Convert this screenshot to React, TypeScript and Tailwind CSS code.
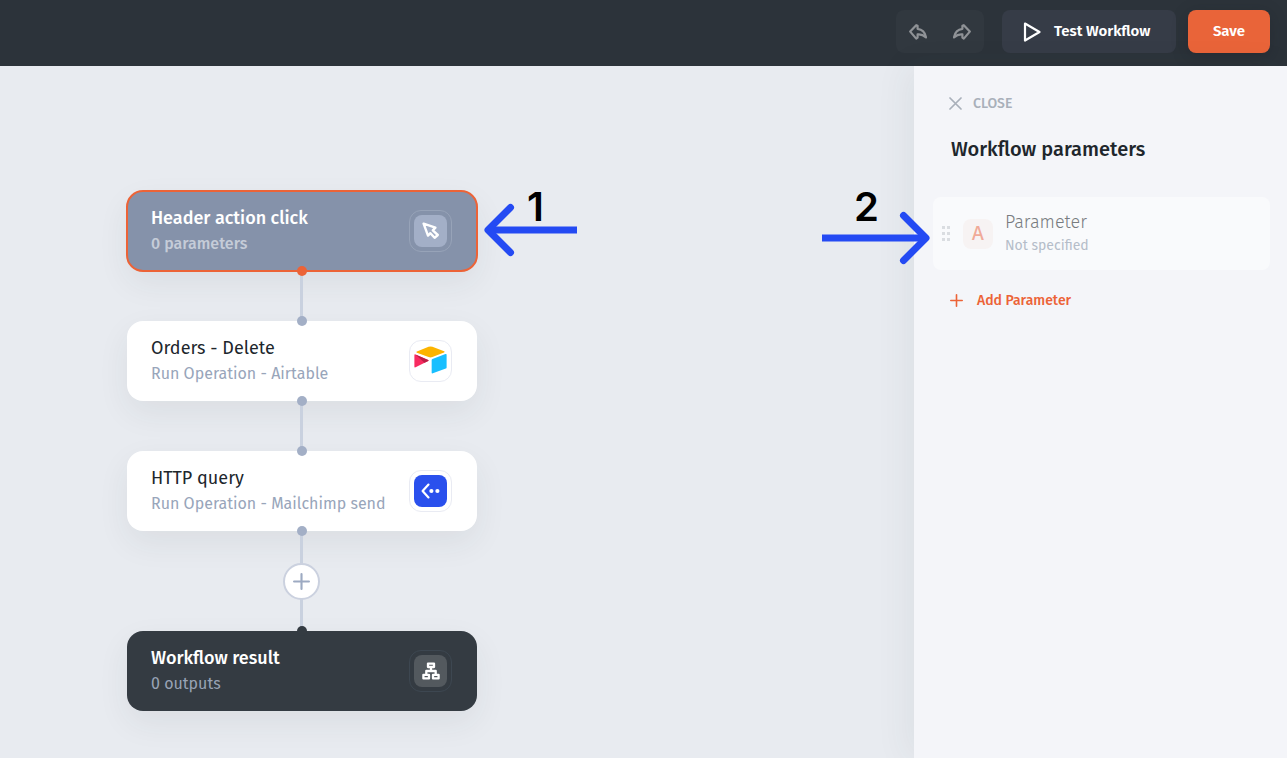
import type { ReactNode } from 'react';

const MouseCursor = () => (
  <svg width="18" height="18" viewBox="0 0 18 18" fill="none" stroke="white" strokeWidth="2.4" strokeLinejoin="round" aria-hidden="true">
    <path d="M1.6 1.6 L13.4 5.6 L10.8 8.4 L15.8 13 L12.6 15.8 L8.4 11.2 L6 13.6 Z" />
  </svg>
);

const Airtable = () => (
  <svg width="34" height="32" viewBox="0 0 34 32" aria-hidden="true">
    <path d="M15 1.4 Q17 .5 19 1.4 L31 6 Q32.3 6.6 31 7.2 L19 12 Q17 12.8 15 12 L3 7.4 Q1.6 6.7 3 6.1 Z" fill="#fcb400" />
    <path d="M18.2 15 Q18.2 14.2 19 13.9 L32.4 8.8 Q33.6 8.4 33.6 9.5 V22.6 Q33.6 23.4 32.8 23.7 L19.4 28.7 Q18.2 29.1 18.2 28 Z" fill="#18bfff" />
    <path d="M.4 10 Q.4 8.8 1.5 9.3 L14.6 14.9 Q15.6 15.4 14.6 16 L1.6 22.5 Q.4 23 .4 21.9 Z" fill="#f82b60" />
    <path d="M1.5 9.3 L14.6 14.9 Q15.6 15.4 14.6 16 L10.8 17.9 Z" fill="#ba1e45" />
  </svg>
);

const HttpIcon = () => (
  <svg width="20" height="18" viewBox="0 0 20 18" fill="none" aria-hidden="true">
    <path d="M7.5 2.6 L1.6 9 L7.5 15.4" stroke="white" strokeWidth="2.2" strokeLinecap="round" strokeLinejoin="round" />
    <circle cx="10.4" cy="9" r="2.1" fill="white" />
    <circle cx="16.4" cy="9" r="2.1" fill="white" />
  </svg>
);

const TreeIcon = () => (
  <svg width="18" height="18" viewBox="0 0 18 18" fill="none" stroke="white" strokeWidth="2.3" strokeLinejoin="round" aria-hidden="true">
    <path d="M6 1.6 H12 V5 H6 Z M1.4 12.8 H7 V16.4 H1.4 Z M11 12.8 H16.6 V16.4 H11 Z M9 5 V9 M4.3 12.8 V9 H13.7 V12.8" />
  </svg>
);

const PlusIcon = ({ className }: { className: string }) => (
  <svg viewBox="0 0 16 16" className={className} stroke="currentColor" strokeWidth="2" strokeLinecap="round" aria-hidden="true">
    <path d="M8 1 V15 M1 8 H15" />
  </svg>
);

const UndoIcon = ({ className = '' }: { className?: string }) => (
  <svg width="18" height="16" viewBox="0 0 18 16" className={className} fill="none" stroke="#8f9296" strokeWidth="2.2" strokeLinejoin="round" aria-hidden="true">
    <path d="M7.2 1.2 L1.2 7.6 L7.2 14.6 L8.6 13.6 V10.4 C11.6 10 14.2 10.9 17 13.4 C16.2 8.6 13.2 5.4 8.6 4.8 V1.8 Z" />
  </svg>
);

type NodeProps = {
  title: string;
  detail: string;
  card: string;
  titleStyle: string;
  detailStyle: string;
  frame: string;
  tile: string;
  icon: ReactNode;
};

function WorkflowNode({ title, detail, card, titleStyle, detailStyle, frame, tile, icon }: NodeProps) {
  return (
    <article className={`flex h-20 w-full items-center justify-between rounded-2xl pr-[25px] pl-6 shadow-[0_12px_32px_rgba(40,60,60,0.07)] ${card}`}>
      <div>
        <h2 className={`text-[18px] leading-[26px] ${titleStyle}`}>{title}</h2>
        <p className={`text-[16px] leading-[26px] ${detailStyle}`}>{detail}</p>
      </div>
      <div className={`flex h-[42px] w-[43px] shrink-0 items-center justify-center rounded-xl border ${frame}`}>
        <div className={`flex h-8 w-[33px] items-center justify-center rounded-lg ${tile}`}>{icon}</div>
      </div>
    </article>
  );
}

function Connector({ from, to, children }: { from: string; to: string; children?: ReactNode }) {
  return (
    <div className="relative flex w-[349px] justify-center">
      <div className={`flex w-[3px] items-center justify-center bg-[#c9d1df] ${children ? 'h-[100px]' : 'h-[50px]'}`}>{children}</div>
      <span className={`absolute -top-[5px] left-[170px] size-[10px] rounded-full ${from}`} />
      <span className={`absolute -bottom-[5px] left-[170px] size-[10px] rounded-full ${to}`} />
    </div>
  );
}

export default function App() {
  return (
    <div className="flex min-h-screen flex-col bg-[#e8ebf0] font-['Fira_Sans',Roboto,sans-serif]">
      <header className="flex h-[66px] shrink-0 items-start justify-end bg-[#2c333a] pt-[10px] pr-[17px] text-[15px] font-semibold text-white">
        <div className="mr-[18px] flex h-[43px] items-center rounded-lg bg-[#31383f]">
          <button type="button" aria-label="Undo" className="flex h-full w-11 items-center justify-center"><UndoIcon /></button>
          <button type="button" aria-label="Redo" className="flex h-full w-11 items-center justify-center"><UndoIcon className="-scale-x-100" /></button>
        </div>
        <button type="button" className="mr-3 flex h-[43px] w-[174px] items-center gap-[13px] rounded-lg bg-[#363c47] pl-[21px]">
          <svg width="18" height="20" viewBox="0 0 18 20" fill="none" stroke="white" strokeWidth="2.2" strokeLinejoin="round" aria-hidden="true">
            <path d="M2 1.5 L16.5 10 L2 18.5 Z" />
          </svg>
          Test Workflow
        </button>
        <button type="button" className="h-[43px] w-[82px] rounded-lg bg-[#e96439] shadow-[0_4px_16px_rgba(20,25,30,0.25)]">Save</button>
      </header>

      <div className="relative flex grow">
        <main className="min-w-0 grow pt-[125px] pb-12 pl-[127px]">
          <div className="flex w-[350px] flex-col">
            <WorkflowNode
              title="Header action click"
              detail="0 parameters"
              card="bg-[#8592aa] outline-2 -outline-offset-1 outline-[#ec6337]"
              titleStyle="font-medium text-white"
              detailStyle="font-medium text-[#c5ccd8]"
              frame="border-[#97a3b8]"
              tile="bg-[#a3afc7]"
              icon={<MouseCursor />}
            />
            <Connector from="bg-[#ec6337]" to="bg-[#a3afc6]" />
            <WorkflowNode
              title="Orders - Delete"
              detail="Run Operation - Airtable"
              card="bg-white"
              titleStyle="font-normal text-[#20262c]"
              detailStyle="text-[#98a5ba]"
              frame="border-[#e9ebf3]"
              tile="bg-white"
              icon={<Airtable />}
            />
            <Connector from="bg-[#a3afc6]" to="bg-[#a3afc6]" />
            <WorkflowNode
              title="HTTP query"
              detail="Run Operation - Mailchimp send"
              card="bg-white"
              titleStyle="font-normal text-[#20262c]"
              detailStyle="text-[#98a5ba]"
              frame="border-[#e9ebf3]"
              tile="bg-[#2a50ed]"
              icon={<HttpIcon />}
            />
            <Connector from="bg-[#a3afc6]" to="bg-[#343b42]">
              <button type="button" aria-label="Add step" className="flex size-[37px] shrink-0 items-center justify-center rounded-full border-2 border-[#cbd1df] bg-white text-[#9daac2]">
                <PlusIcon className="size-[17px]" />
              </button>
            </Connector>
            <WorkflowNode
              title="Workflow result"
              detail="0 outputs"
              card="bg-[#343b42]"
              titleStyle="font-medium text-white"
              detailStyle="text-[#98a3b5]"
              frame="border-[#3d4751]"
              tile="bg-[#53595e]"
              icon={<TreeIcon />}
            />
          </div>
        </main>

        <aside className="w-[373px] shrink-0 bg-[#f4f5f9] pr-[17px] pl-[19px] shadow-[-8px_0_32px_rgba(50,70,70,0.06)]">
          <button type="button" className="mt-[27px] ml-4 flex h-5 items-center gap-[11px] text-[14px] font-medium text-[#a9b0ba]">
            <svg width="13" height="13" viewBox="0 0 13 13" stroke="currentColor" strokeWidth="1.7" strokeLinecap="round" aria-hidden="true">
              <path d="M1 1 L12 12 M12 1 L1 12" />
            </svg>
            CLOSE
          </button>
          <h1 className="mt-[22px] ml-[18px] text-[20px] leading-7 font-medium text-[#20262c]">Workflow parameters</h1>
          <div className="mt-[34px] flex h-[73px] items-center rounded-lg bg-[#f9fafc]">
            <svg width="10" height="17" viewBox="0 0 10 17" className="ml-2 shrink-0" fill="#dadde1" aria-hidden="true">
              <path d="M1 1h3v3H1z M6 1h3v3H6z M1 7h3v3H1z M6 7h3v3H6z M1 13h3v3H1z M6 13h3v3H6z" />
            </svg>
            <span className="ml-3 flex size-[30px] items-center justify-center rounded-lg bg-[#f7f3f3] font-['Inter',sans-serif] text-[18px] font-medium text-[#f0aa98]">A</span>
            <div className="ml-3">
              <p className="text-[18px] leading-6 font-light text-[#787c80]">Parameter</p>
              <p className="text-[14px] leading-6 text-[#b5bdc9]">Not specified</p>
            </div>
          </div>
          <button type="button" className="mt-5 ml-[17px] flex h-5 items-center gap-[14px] text-[14px] font-medium text-[#ec6337]">
            <PlusIcon className="size-[13px]" />
            Add Parameter
          </button>
        </aside>

        <div className="absolute top-[116px] left-[484px]">
          <span className="absolute left-[43px] font-['Inter',sans-serif] text-[40px] leading-[50px] font-semibold text-black">1</span>
          <svg width="93" height="96" viewBox="0 0 93 96" fill="none" stroke="#244af3" strokeWidth="7" aria-hidden="true">
            <path d="M4 48 H93" />
            <path d="M26.5 25.5 L4 48 L26.5 70.5" strokeLinecap="round" strokeLinejoin="round" />
          </svg>
        </div>
        <div className="absolute top-[116px] right-[356px]">
          <span className="absolute left-8 font-['Inter',sans-serif] text-[40px] leading-[50px] font-semibold text-black">2</span>
          <svg width="109" height="96" viewBox="0 0 109 96" fill="none" stroke="#244af3" strokeWidth="7" aria-hidden="true">
            <path d="M0 56 H104" />
            <path d="M81.5 33.5 L104 56 L81.5 78.5" strokeLinecap="round" strokeLinejoin="round" />
          </svg>
        </div>
      </div>
    </div>
  );
}
